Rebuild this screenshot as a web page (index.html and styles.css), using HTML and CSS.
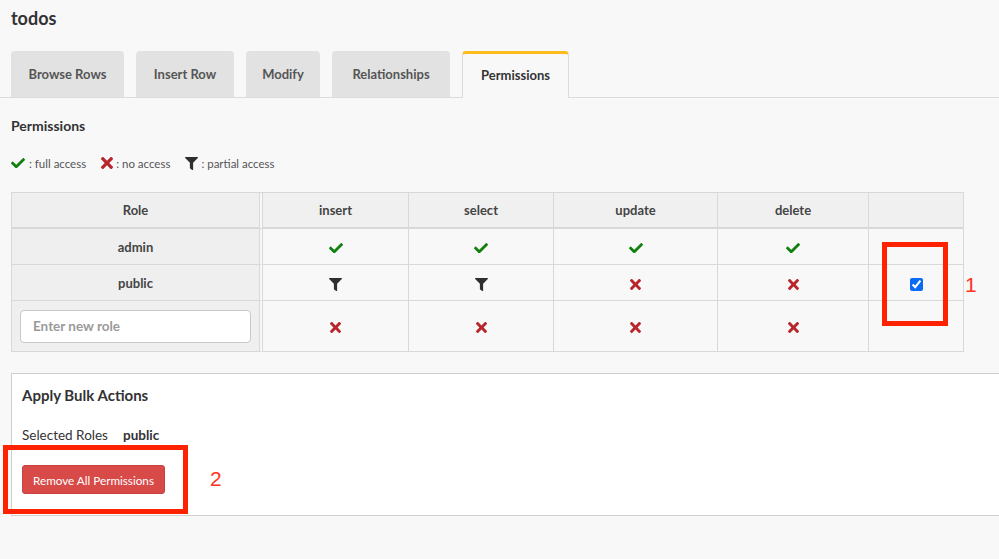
FILE: index.html
```html
<!DOCTYPE html>
<html>
<head>
<meta charset="utf-8">
<title>todos - Permissions</title>
<link rel="stylesheet" href="styles.css">
</head>
<body>
<div class="page">
  <h1 class="title">todos</h1>
  <nav class="tabs">
    <div class="tab tab-browse">Browse Rows</div>
    <div class="tab tab-insert">Insert Row</div>
    <div class="tab tab-modify">Modify</div>
    <div class="tab tab-rel">Relationships</div>
    <div class="tab tab-active">Permissions</div>
  </nav>
  <section class="content">
    <h2 class="section-title">Permissions</h2>
    <div class="legend">
      <span class="legend-item"><svg class="ic ic-check" viewBox="0 64 512 384"><use href="#chk"/></svg>: full access</span>
      <span class="legend-item"><svg class="ic ic-x" viewBox="0 80 352 352"><use href="#xx"/></svg>: no access</span>
      <span class="legend-item"><svg class="ic ic-filter" viewBox="0 0 512 512"><use href="#flt"/></svg>: partial access</span>
    </div>

    <table class="perm-table">
      <colgroup>
        <col class="col-role"><col class="col-insert"><col class="col-select"><col class="col-update"><col class="col-delete"><col class="col-bulk">
      </colgroup>
      <thead>
        <tr>
          <th class="role-cell">Role</th>
          <th>insert</th>
          <th>select</th>
          <th>update</th>
          <th>delete</th>
          <th></th>
        </tr>
      </thead>
      <tbody>
        <tr>
          <td class="role-cell">admin</td>
          <td><svg class="ic ic-check" viewBox="0 64 512 384"><use href="#chk"/></svg></td>
          <td><svg class="ic ic-check" viewBox="0 64 512 384"><use href="#chk"/></svg></td>
          <td><svg class="ic ic-check" viewBox="0 64 512 384"><use href="#chk"/></svg></td>
          <td><svg class="ic ic-check" viewBox="0 64 512 384"><use href="#chk"/></svg></td>
          <td></td>
        </tr>
        <tr>
          <td class="role-cell">public</td>
          <td><svg class="ic ic-filter" viewBox="0 0 512 512"><use href="#flt"/></svg></td>
          <td><svg class="ic ic-filter" viewBox="0 0 512 512"><use href="#flt"/></svg></td>
          <td><svg class="ic ic-x" viewBox="0 80 352 352"><use href="#xx"/></svg></td>
          <td><svg class="ic ic-x" viewBox="0 80 352 352"><use href="#xx"/></svg></td>
          <td><input type="checkbox" class="bulk-check" checked></td>
        </tr>
        <tr class="new-row">
          <td class="role-cell"><input type="text" class="role-input" placeholder="Enter new role"></td>
          <td><svg class="ic ic-x" viewBox="0 80 352 352"><use href="#xx"/></svg></td>
          <td><svg class="ic ic-x" viewBox="0 80 352 352"><use href="#xx"/></svg></td>
          <td><svg class="ic ic-x" viewBox="0 80 352 352"><use href="#xx"/></svg></td>
          <td><svg class="ic ic-x" viewBox="0 80 352 352"><use href="#xx"/></svg></td>
          <td></td>
        </tr>
      </tbody>
    </table>

    <div class="bulk">
      <h3 class="bulk-title">Apply Bulk Actions</h3>
      <div class="bulk-roles"><span class="bulk-label">Selected Roles</span><b class="bulk-role">public</b></div>
      <button class="btn-danger">Remove All Permissions</button>
    </div>
  </section>

  <div class="annot annot-box1"></div>
  <div class="annot-num annot-num1">1</div>
  <div class="annot annot-box2"></div>
  <div class="annot-num annot-num2">2</div>
</div>

<svg class="defs" width="0" height="0">
  <defs>
    <path id="chk" d="M173.898 439.404l-166.4-166.4c-9.997-9.997-9.997-26.206 0-36.204l36.203-36.204c9.997-9.998 26.207-9.998 36.204 0L192 312.69 432.095 72.596c9.997-9.997 26.207-9.997 36.204 0l36.203 36.204c9.997 9.997 9.997 26.206 0 36.204l-294.4 294.401c-9.998 9.997-26.207 9.997-36.204-.001z"/>
    <path id="xx" d="M242.72 256l100.07-100.07c12.28-12.28 12.28-32.19 0-44.48l-22.24-22.24c-12.28-12.28-32.19-12.28-44.48 0L176 189.28 75.93 89.21c-12.28-12.28-32.19-12.28-44.48 0L9.21 111.45c-12.28 12.28-12.28 32.19 0 44.48L109.28 256 9.21 356.07c-12.28 12.28-12.28 32.19 0 44.48l22.24 22.24c12.28 12.28 32.2 12.28 44.48 0L176 322.72l100.07 100.07c12.28 12.28 32.2 12.28 44.48 0l22.24-22.24c12.28-12.28 12.28-32.19 0-44.48L242.72 256z"/>
    <path id="flt" d="M487.976 0H24.028C2.71 0-8.047 25.866 7.058 40.971L192 225.941V432c0 7.831 3.821 15.17 10.237 19.662l80 55.98C298.02 518.69 320 507.493 320 487.98V225.941l184.947-184.97C520.021 25.896 509.338 0 487.976 0z"/>
  </defs>
</svg>
</body>
</html>
```

FILE: styles.css
```css
* { box-sizing: border-box; }
html, body {
  margin: 0;
  padding: 0;
  background: #f8f8f9;
  overflow: hidden;
}
body {
  font-family: Lato, "Noto Sans", sans-serif;
  color: #333;
  width: 999px;
  height: 559px;
}
.page {
  position: relative;
  height: 559px;
}
.title {
  margin: 0;
  padding: 5px 0 0 11px;
  font-size: 18px;
  line-height: 26px;
  font-weight: 700;
  color: #333;
}
.tabs {
  display: flex;
  gap: 12px;
  margin-top: 20px;
  padding-left: 11px;
  border-bottom: 1px solid #dcdcdc;
  height: 47px;
}
.tab {
  height: 46px;
  display: flex;
  align-items: center;
  justify-content: center;
  background: #e2e2e2;
  border-radius: 4px 4px 0 0;
  font-size: 13px;
  font-weight: 700;
  color: #555;
}
.tab-browse { width: 113px; }
.tab-insert { width: 98px; }
.tab-modify { width: 74px; }
.tab-rel { width: 118px; }
.tab-active {
  width: 107px;
  height: 47px;
  background: #f8f8f9;
  border: 1px solid #dcdcdc;
  border-top: 3px solid #fdbb1c;
  border-bottom: none;
  color: #333;
  padding-bottom: 2px;
}
.content {
  padding-left: 11px;
}
.section-title {
  margin: 18px 0 0;
  font-size: 14px;
  line-height: 20px;
  font-weight: 700;
  color: #333;
}
.legend {
  margin-top: 19px;
  display: flex;
  gap: 15px;
  height: 16px;
  align-items: center;
  font-size: 11.5px;
  color: #555;
}
.legend-item {
  display: flex;
  align-items: center;
  gap: 3px;
}
.ic { display: inline-block; vertical-align: middle; }
.ic-check { width: 14px; height: 10.5px; fill: #12800f; }
.ic-x { width: 11px; height: 11px; fill: #b8262b; }
.ic-filter { width: 13px; height: 13px; fill: #2f2f2f; }
.legend .ic-check { width: 14px; height: 10.5px; margin-right: 1px; }
.legend .ic-x { width: 12px; height: 12px; }
.legend .ic-filter { width: 13px; height: 13px; }

.perm-table {
  margin-top: 21px;
  width: 952px;
  table-layout: fixed;
  border-collapse: separate;
  border-spacing: 0;
  border-top: 1px solid #d8d8d8;
  border-left: 1px solid #d8d8d8;
}
.col-role { width: 251px; }
.col-insert { width: 146px; }
.col-select { width: 145px; }
.col-update { width: 164px; }
.col-delete { width: 151px; }
.col-bulk { width: 95px; }
.perm-table th,
.perm-table td {
  border-right: 1px solid #d8d8d8;
  border-bottom: 1px solid #d8d8d8;
  text-align: center;
  vertical-align: middle;
  padding: 0;
  font-size: 13px;
}
.perm-table th {
  height: 36px;
  background: #f0f0f0;
  border-bottom: 2px solid #d8d8d8;
  font-weight: 700;
  color: #444;
}
.perm-table td {
  height: 36px;
}
.perm-table .role-cell {
  background: #efefef;
  background-clip: padding-box;
  border-right: 4px double #d8d8d8;
  font-weight: 700;
  color: #444;
}
.perm-table .new-row td {
  height: 51px;
}
.role-input {
  display: block;
  margin: 0 auto 0 8px;
  width: 231px;
  height: 33px;
  border: 1px solid #c8c8c8;
  border-radius: 4px;
  background: #fff;
  padding: 0 12px;
  font-family: Lato, "Noto Sans", sans-serif;
  font-size: 13.5px;
  font-weight: 700;
  color: #555;
  outline: none;
}
.role-input::placeholder { color: #9a9a9a; }
.bulk-check {
  width: 13px;
  height: 13px;
  margin: 2px 0 0 0;
  accent-color: #0a6cf5;
  vertical-align: middle;
}

.bulk {
  margin-top: 21px;
  width: 1000px;
  background: #fff;
  border: 1px solid #cfcfcf;
  padding: 11px 10px 21px 10px;
}
.bulk-title {
  margin: 0;
  font-size: 15px;
  line-height: 20px;
  font-weight: 700;
  color: #333;
}
.bulk-roles {
  margin-top: 20px;
  font-size: 13.5px;
  line-height: 20px;
  color: #333;
}
.bulk-label { margin-right: 15px; }
.bulk-role { font-weight: 700; }
.btn-danger {
  display: block;
  margin-top: 20px;
  width: 143px;
  height: 29px;
  background: #d74a48;
  border: 1px solid #c9403e;
  border-radius: 3px;
  color: #fff;
  font-family: Lato, "Noto Sans", sans-serif;
  font-size: 11.7px;
  padding: 0;
}

.annot {
  position: absolute;
  border: 5px solid #ff2200;
}
.annot-box1 { left: 882px; top: 242px; width: 66px; height: 84px; }
.annot-box2 { left: 3px; top: 445px; width: 185px; height: 69px; }
.annot-num {
  position: absolute;
  font-family: "Liberation Sans", Arial, sans-serif;
  font-size: 21px;
  line-height: 24px;
  color: #ff3322;
}
.annot-num1 { left: 965px; top: 273px; }
.annot-num2 { left: 210px; top: 467px; }
.defs { position: absolute; width: 0; height: 0; }
```
